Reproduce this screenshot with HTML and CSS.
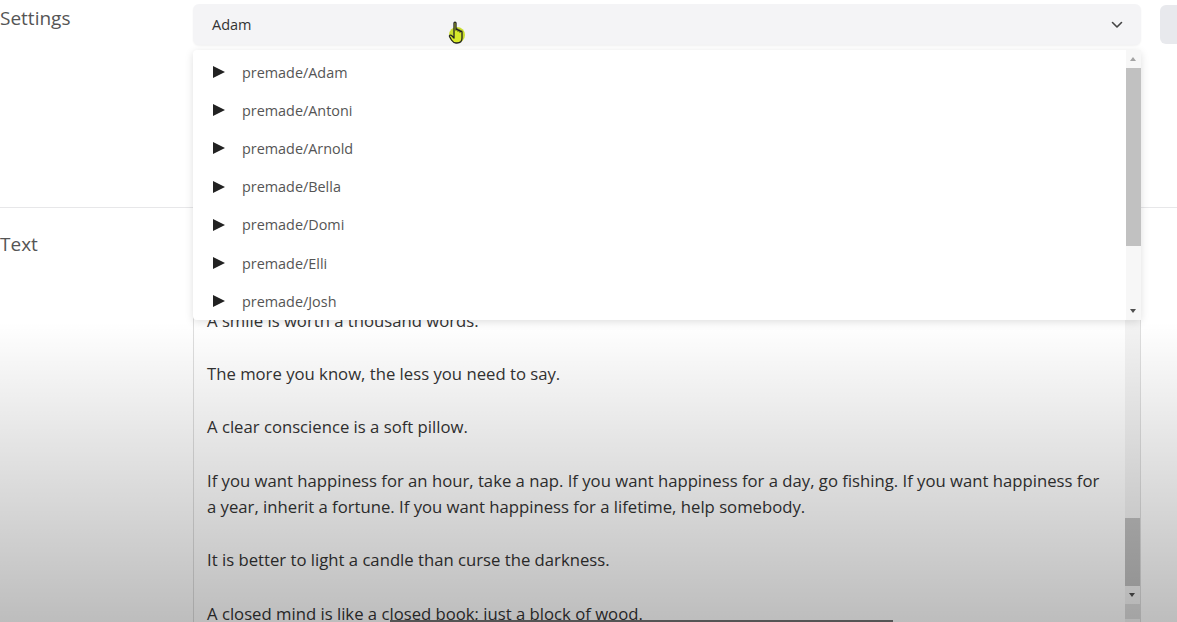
FILE: index.html
```html
<!DOCTYPE html>
<html lang="en">
<head>
    <meta charset="UTF-8">
    <meta name="viewport" content="width=device-width, initial-scale=1.0">
    <title>Voice Settings</title>
    <link rel="stylesheet" href="styles.css">
</head>
<body>
    <div class="page">
        <div class="row settings-row">
            <div class="row-label">Settings</div>
            <div class="settings-body">
                <div class="select">
                    <span>Adam</span>
                    <svg class="chevron" width="12" height="8" viewBox="0 0 12 8">
                        <path d="M1.5 1.5 L6 6 L10.5 1.5" fill="none" stroke="#444" stroke-width="1.6" stroke-linecap="round" stroke-linejoin="round"/>
                    </svg>
                </div>
                <div class="side-btn"></div>
            </div>
        </div>

        <div class="row text-row">
            <div class="row-label text-label">Text</div>
            <div class="textbox">
                <div class="text-content">
                    <p>A smile is worth a thousand words.</p>
                    <p>The more you know, the less you need to say.</p>
                    <p>A clear conscience is a soft pillow.</p>
                    <p>If you want happiness for an hour, take a nap. If you want happiness for a day, go fishing. If you want happiness for a year, inherit a fortune. If you want happiness for a lifetime, help somebody.</p>
                    <p>It is better to light a candle than curse the darkness.</p>
                    <p>A closed mind is like a closed book; just a block of wood.</p>
                </div>
                <div class="vscroll">
                    <div class="thumb text-thumb"></div>
                    <div class="arrow down"></div>
                    <div class="resize"></div>
                </div>
            </div>
        </div>

        <!-- open voice list -->
        <div class="dropdown">
            <ul class="options">
                <li><span class="play"></span>premade/Adam</li>
                <li><span class="play"></span>premade/Antoni</li>
                <li><span class="play"></span>premade/Arnold</li>
                <li><span class="play"></span>premade/Bella</li>
                <li><span class="play"></span>premade/Domi</li>
                <li><span class="play"></span>premade/Elli</li>
                <li><span class="play"></span>premade/Josh</li>
            </ul>
            <div class="vscroll list-scroll">
                <div class="arrow up"></div>
                <div class="thumb list-thumb"></div>
                <div class="track"></div>
                <div class="arrow down"></div>
            </div>
        </div>

        <svg class="cursor" width="22" height="26" viewBox="0 0 22 26">
            <circle cx="11" cy="15" r="8" fill="#c6dd1c" opacity="0.9"/>
            <path d="M8 3 C8 1.8 10 1.8 10 3 L10 10 C10 9 12 9 12 10 L12 11 C12 10 14 10 14 11 L14 12 C14 11 16 11 16 12 L16 18 C16 21 14 23 11 23 L10 23 C8 23 6.5 21.5 5.5 20 L3.5 16.5 C3 15.5 4.5 14.5 5.5 15.5 L8 18 Z" fill="#d8ea2a" stroke="#222" stroke-width="1.3" stroke-linejoin="round"/>
        </svg>

        <div class="video-shade"></div>
        <div class="video-progress"></div>
    </div>
</body>
</html>
```

FILE: styles.css
```css
body {
    margin: 0;
    padding: 0;
    background: #ffffff;
    font-family: "Open Sans", "Liberation Sans", sans-serif;
    overflow: hidden;
}

.page {
    position: relative;
    width: 1177px;
    height: 622px;
    overflow: hidden;
}

.row {
    display: flex;
}

.row-label {
    width: 193px;
    flex-shrink: 0;
    font-size: 19px;
    line-height: 22px;
    color: #555;
}

.settings-row {
    height: 207px;
    border-bottom: 1px solid #e7e7e9;
}

.settings-row .row-label {
    padding-top: 7px;
}

.settings-body {
    display: flex;
    align-items: flex-start;
    padding-top: 4px;
}

.select {
    width: 948px;
    height: 41px;
    box-sizing: border-box;
    padding: 0 18px 0 19px;
    display: flex;
    align-items: center;
    justify-content: space-between;
    background: #f4f4f6;
    border-radius: 6px;
    box-shadow: 0 1px 2px rgba(0, 0, 0, 0.05);
    font-size: 14.5px;
    color: #333;
}

.side-btn {
    margin-left: 19px;
    margin-top: 1px;
    width: 40px;
    height: 39px;
    background: #e8e9ed;
    border-radius: 6px;
}

.text-row .text-label {
    padding-top: 25px;
}

.textbox {
    margin-top: 24px;
    width: 948px;
    height: 440px;
    box-sizing: border-box;
    display: flex;
    border: 1px solid #dedede;
    border-radius: 6px;
    background: #fff;
}

.text-content {
    flex: 1;
    padding: 75px 14px 0 13px;
    font-size: 16.7px;
    line-height: 26.6px;
    color: #333;
}

.text-content p {
    margin: 0 0 26.6px;
}

.vscroll {
    width: 15px;
    flex-shrink: 0;
    display: flex;
    flex-direction: column;
    align-items: center;
    background: #f3f3f3;
}

.thumb {
    width: 15px;
    background: #c1c1c1;
}

.text-thumb {
    margin-top: 285px;
    height: 68px;
}

.arrow {
    width: 15px;
    height: 18px;
    position: relative;
}

.arrow::after {
    content: "";
    position: absolute;
    left: 4px;
    top: 7px;
    border-left: 3.5px solid transparent;
    border-right: 3.5px solid transparent;
}

.arrow.down::after {
    border-top: 4px solid #505050;
}

.arrow.up::after {
    border-bottom: 4px solid #a3a3a3;
}

.resize {
    width: 15px;
    height: 15px;
    background: #dcdcdc;
}

.dropdown {
    position: absolute;
    left: 193px;
    top: 50px;
    width: 948px;
    height: 270px;
    display: flex;
    background: #fff;
    border-radius: 4px;
    box-shadow: 0 2px 8px rgba(0, 0, 0, 0.13);
}

.options {
    flex: 1;
    list-style: none;
    margin: 0;
    padding: 3px 0 0;
}

.options li {
    height: 38.2px;
    display: flex;
    align-items: center;
    padding-left: 20px;
    font-size: 14.4px;
    color: #555;
}

.play {
    width: 0;
    height: 0;
    margin-right: 17px;
    border-top: 6.5px solid transparent;
    border-bottom: 6.5px solid transparent;
    border-left: 12px solid #222;
}

.list-scroll {
    background: #f7f7f7;
}

.list-thumb {
    height: 178px;
}

.track {
    flex: 1;
}

.cursor {
    position: absolute;
    left: 446px;
    top: 20px;
}

.video-shade {
    position: absolute;
    left: 0;
    right: 0;
    bottom: 0;
    height: 300px;
    background: linear-gradient(to bottom, rgba(0, 0, 0, 0), rgba(0, 0, 0, 0.26));
    pointer-events: none;
}

.video-progress {
    position: absolute;
    left: 390px;
    bottom: 0;
    width: 503px;
    height: 2px;
    background: #555;
}
```
